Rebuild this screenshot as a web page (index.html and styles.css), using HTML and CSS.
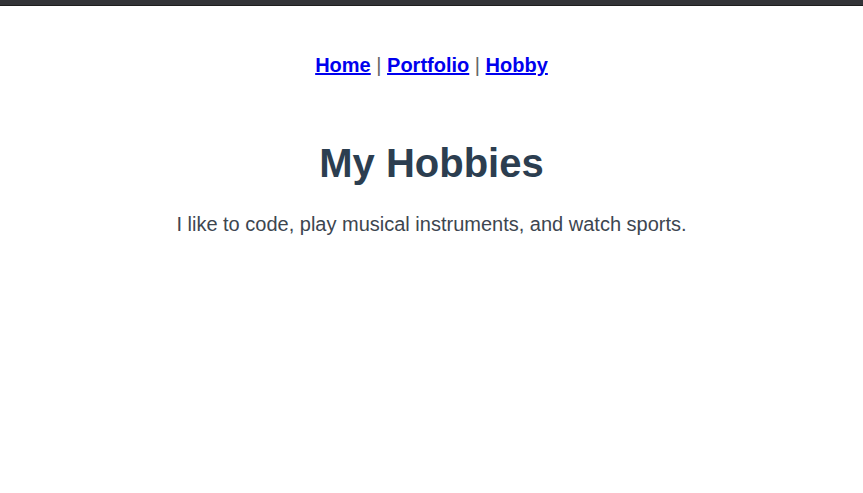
FILE: index.html
```html
<!DOCTYPE html>
<html lang="en">
<head>
<meta charset="utf-8">
<title>My Hobbies</title>
<link rel="stylesheet" href="styles.css">
</head>
<body>
<div class="topbar"></div>
<nav class="nav">
  <a href="#">Home</a><span class="sep"> | </span><a href="#">Portfolio</a><span class="sep"> | </span><a href="#">Hobby</a>
</nav>
<main class="content">
  <h1 class="title">My Hobbies</h1>
  <p class="text">I like to code, play musical instruments, and watch sports.</p>
</main>
</body>
</html>
```
FILE: styles.css
```css
html, body {
  margin: 0;
  padding: 0;
  background: #ffffff;
  font-family: "Liberation Sans", Arial, sans-serif;
}
.topbar {
  height: 5px;
  background: #333438;
  border-bottom: 1px solid #1e1e1e;
}
.nav {
  margin-top: 48px;
  text-align: center;
  font-size: 20px;
  font-weight: bold;
  line-height: 23px;
}
.nav a {
  color: #0000ee;
  text-decoration: underline;
}
.sep {
  font-weight: normal;
  color: #666666;
}
.content {
  text-align: center;
}
.title {
  margin: 63px 0 0 0;
  font-size: 40px;
  font-weight: bold;
  line-height: 46px;
  color: #2c3e50;
}
.text {
  margin: 27px 0 0 0;
  font-size: 20px;
  line-height: 23px;
  color: #3d4650;
}
```
